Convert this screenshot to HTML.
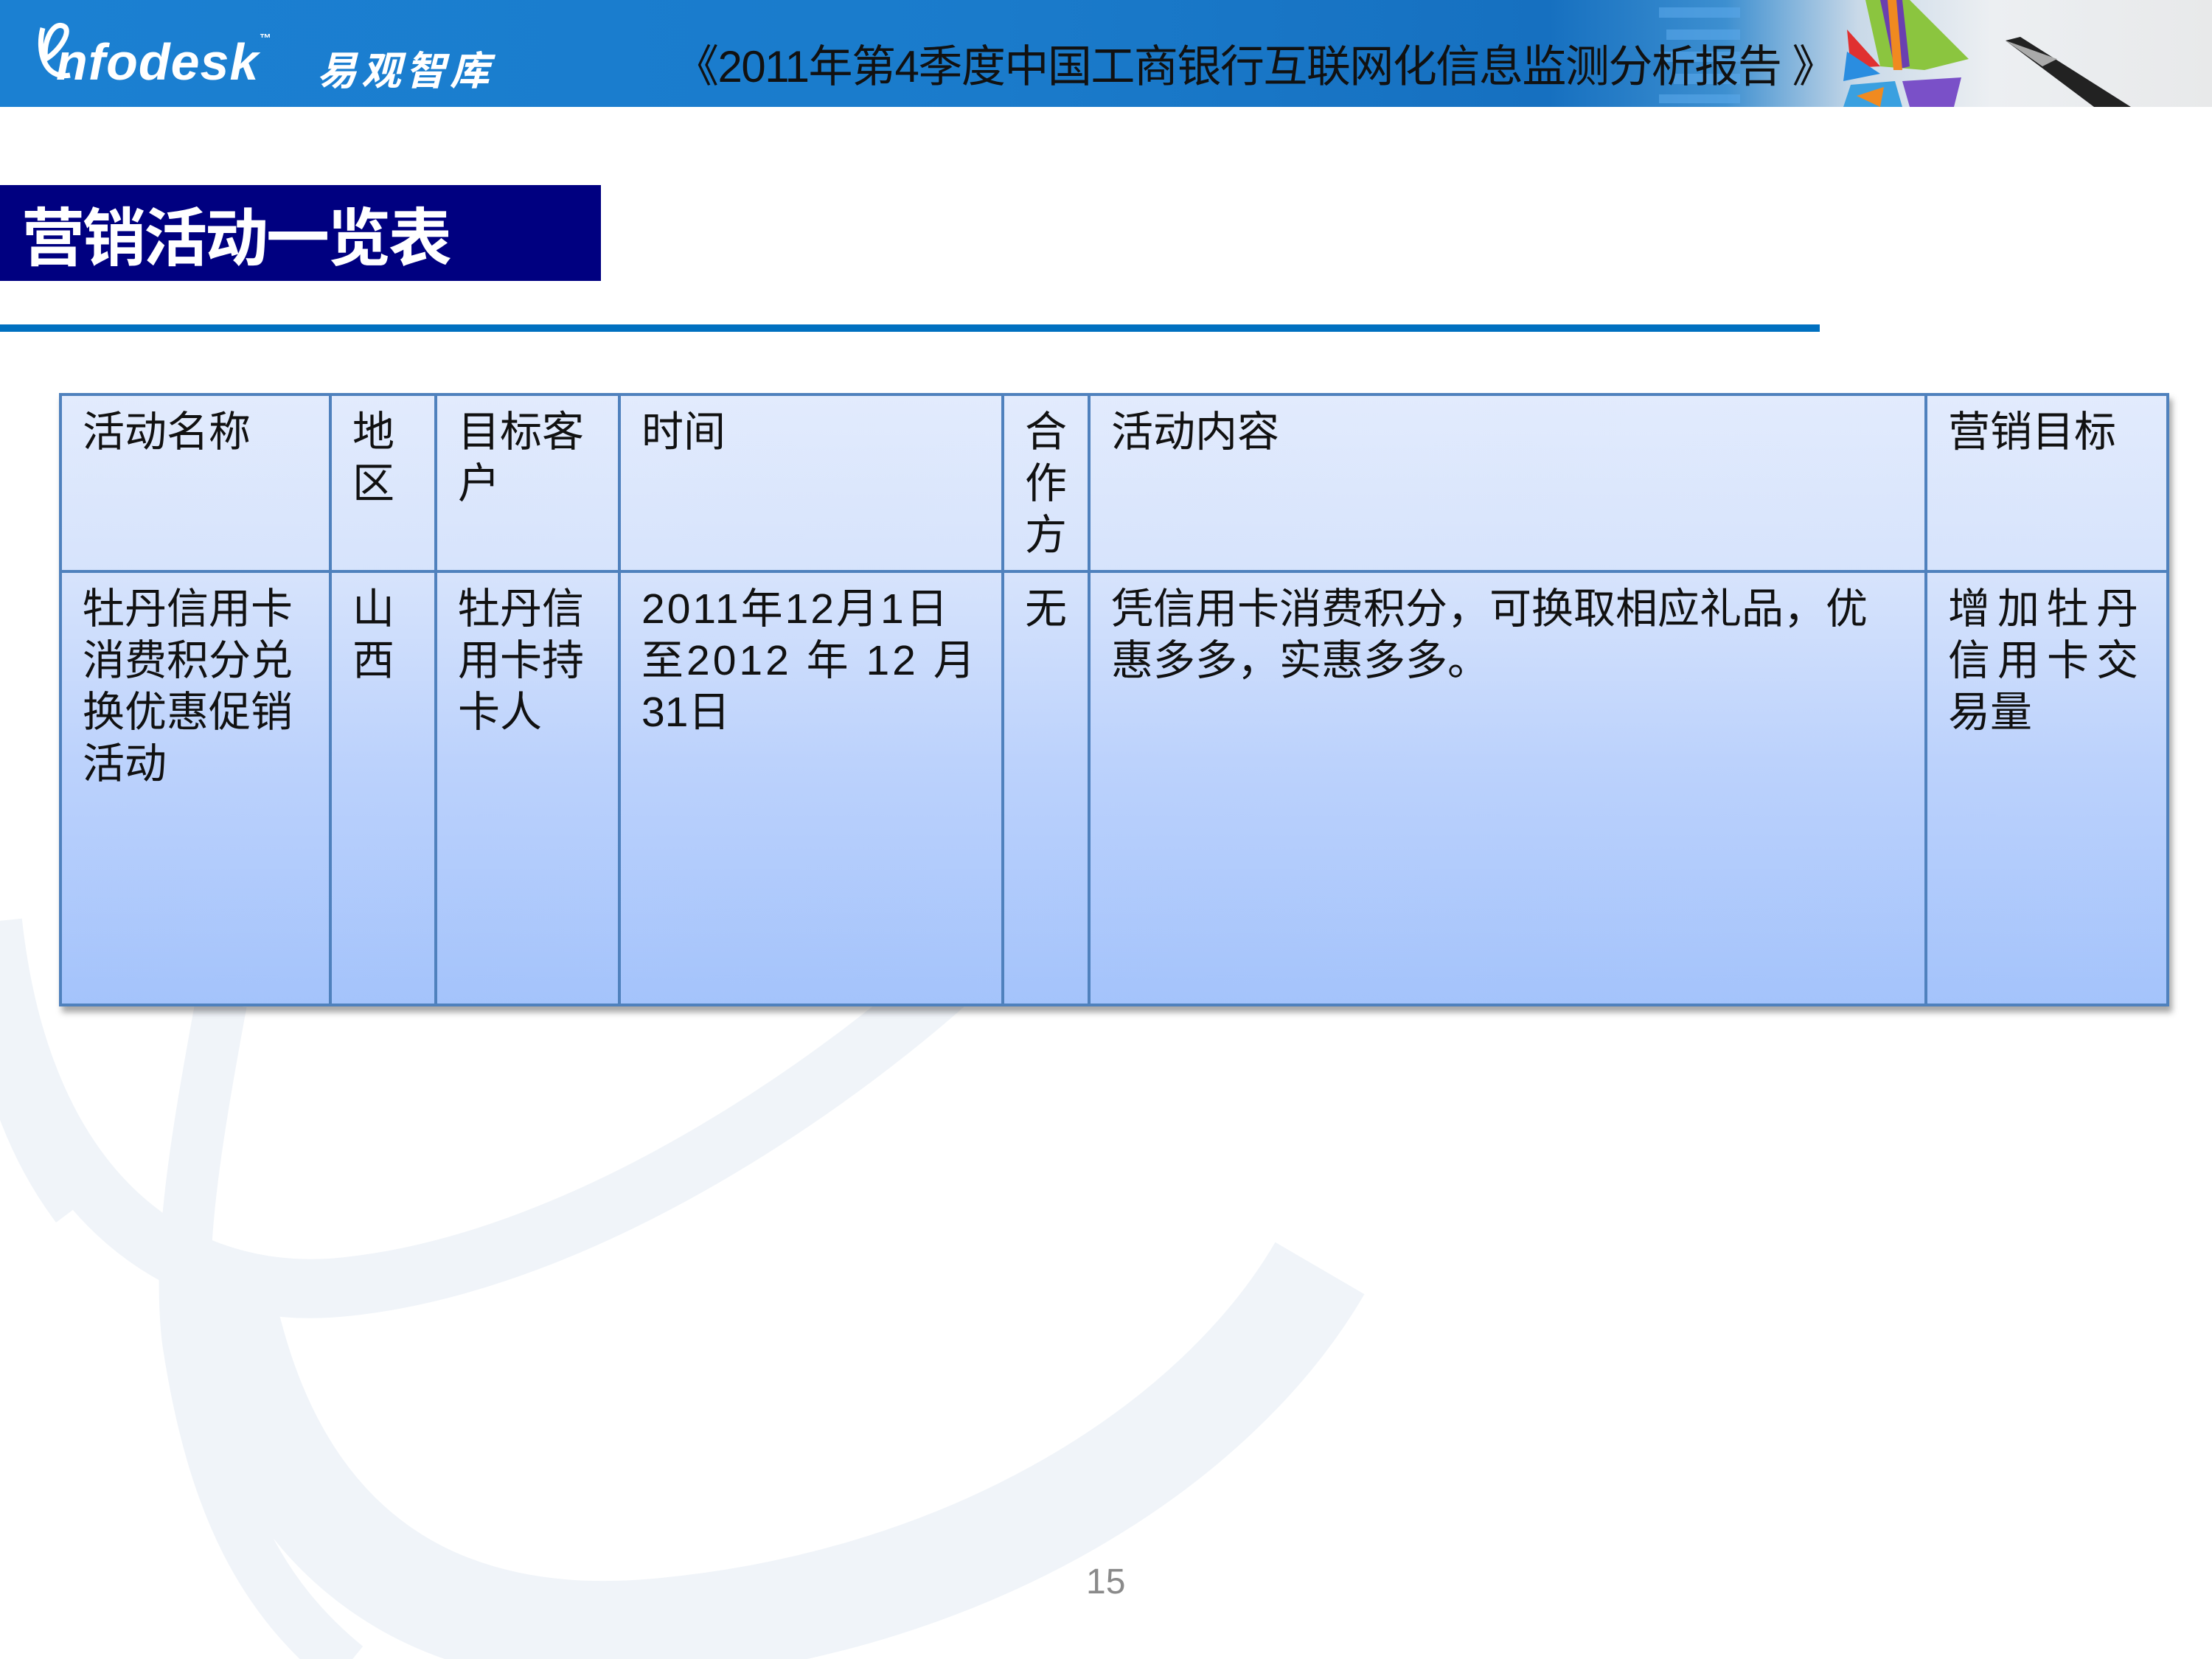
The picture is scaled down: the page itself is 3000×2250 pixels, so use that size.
<!DOCTYPE html>
<html><head><meta charset="utf-8">
<style>
*{margin:0;padding:0;box-sizing:border-box}
body{width:3000px;height:2250px;position:relative;overflow:hidden;background:#fff;font-family:"Liberation Sans","Noto Sans CJK SC",sans-serif}
.hdr{position:absolute;left:0;top:0;width:3000px;height:145px;background:linear-gradient(90deg,#1b80d2 0%,#1a7bcb 45%,#1670c0 70%,#3d8fd0 78%,#c9d9e8 84%,#eceff2 90%,#e8e9ea 100%);overflow:hidden}
.title{position:absolute;left:915px;top:42px;font-size:60px;color:#111;white-space:nowrap;letter-spacing:-1.5px}
.logo{position:absolute;left:76px;top:44px;font:italic bold 70px "Liberation Sans",sans-serif;color:#fff;letter-spacing:1px}
.logocn{position:absolute;left:430px;top:52px;font-weight:bold;font-style:italic;font-size:54px;color:#fff;letter-spacing:6px}
.navy{position:absolute;left:0;top:251px;width:815px;height:130px;background:#000080}
.navy span{position:absolute;left:29px;top:2px;font-size:86px;font-weight:bold;color:#fff;letter-spacing:-3px}
.line{position:absolute;left:0;top:440px;width:2468px;height:10px;background:#0070c0}
table{position:absolute;left:80px;top:533px;width:2862px;height:832px;border-collapse:collapse;background:linear-gradient(180deg,#e2ebfd 0%,#d6e3fc 30%,#bcd2fc 60%,#a4c3fb 100%);box-shadow:4px 8px 8px rgba(0,0,0,.35)}
td{border:4px solid #4f81bd;vertical-align:top;padding:14px 0 0 28px;font-size:57px;line-height:70px;color:#111}
.num{position:absolute;left:1473px;top:2118px;font-size:48px;color:#8a8a8a}
</style></head><body>
<svg style="position:absolute;left:0;top:0" width="3000" height="2250">
<g fill="none" stroke="#f0f4f9" stroke-linecap="butt">
<path d="M -10 1250 C 30 1620 240 1770 470 1745 C 800 1710 1150 1460 1320 1300" stroke-width="80"/>
<path d="M 300 1360 C 265 1550 240 1700 255 1820 C 290 2050 360 2170 470 2260" stroke-width="70"/>
<path d="M 300 1750 C 370 2110 600 2240 900 2210 C 1320 2170 1650 1960 1790 1720" stroke-width="140"/>
<path d="M -20 1300 C 0 1460 40 1560 100 1640" stroke-width="60"/>
</g>
</svg>
<div class="hdr">
<svg style="position:absolute;left:2250px;top:0" width="750" height="145">
<g fill="#5aa8ea" opacity=".6"><rect x="0" y="10" width="110" height="14"/><rect x="10" y="40" width="100" height="14"/><rect x="0" y="70" width="110" height="14"/><rect x="20" y="100" width="90" height="14"/><rect x="0" y="128" width="110" height="12"/></g>
<polygon points="280,0 340,0 420,80 360,95 300,90" fill="#8bc53f"/>
<polygon points="300,0 330,0 340,90 320,95" fill="#6a3fb0"/>
<polygon points="310,0 322,0 330,95 318,95" fill="#f08a20"/>
<polygon points="255,40 300,90 260,92" fill="#e03030"/>
<polygon points="255,70 300,100 250,110" fill="#2a8de0"/>
<polygon points="330,110 410,105 400,145 340,145" fill="#7a50c8"/>
<polygon points="260,115 320,110 330,145 250,145" fill="#3aa0e0"/>
<polygon points="268,130 305,118 300,145" fill="#f08a20"/>
<polygon points="470,55 490,50 640,145 590,145" fill="#222"/>
<polygon points="470,55 540,80 520,90" fill="#aaa"/>
</svg>
<svg style="position:absolute;left:40px;top:30px" width="90" height="90"><path d="M18 8 C10 40 20 78 55 72 M22 50 C40 40 60 10 45 5 C30 0 18 30 22 50" fill="none" stroke="#fff" stroke-width="7"/></svg>
<div class="logo">nfodesk<sup style="font-size:16px;vertical-align:top">™</sup></div>
<div class="logocn">易观智库</div>
<div class="title">《2011年第4季度中国工商银行互联网化信息监测分析报告 》</div>
</div>
<div class="navy"><span>营销活动一览表</span></div>
<div class="line"></div>
<table>
<tr style="height:240px">
<td style="width:366px">活动名称</td>
<td style="width:143px">地<br>区</td>
<td style="width:249px">目标客<br>户</td>
<td style="width:520px">时间</td>
<td style="width:117px">合<br>作<br>方</td>
<td style="width:1135px">活动内容</td>
<td>营销目标</td>
</tr>
<tr>
<td>牡丹信用卡<br>消费积分兑<br>换优惠促销<br>活动</td>
<td>山<br>西</td>
<td>牡丹信<br>用卡持<br>卡人</td>
<td><span style="letter-spacing:3px">2011年12月1日</span><br><span style="letter-spacing:4px">至2012 年 12 月</span><br>31日</td>
<td>无</td>
<td>凭信用卡消费积分，可换取相应礼品，优<br>惠多多，实惠多多。</td>
<td><span style="letter-spacing:10px">增加牡丹<br>信用卡交</span><br>易量</td>
</tr>
</table>
<div class="num">15</div>
</body></html>
